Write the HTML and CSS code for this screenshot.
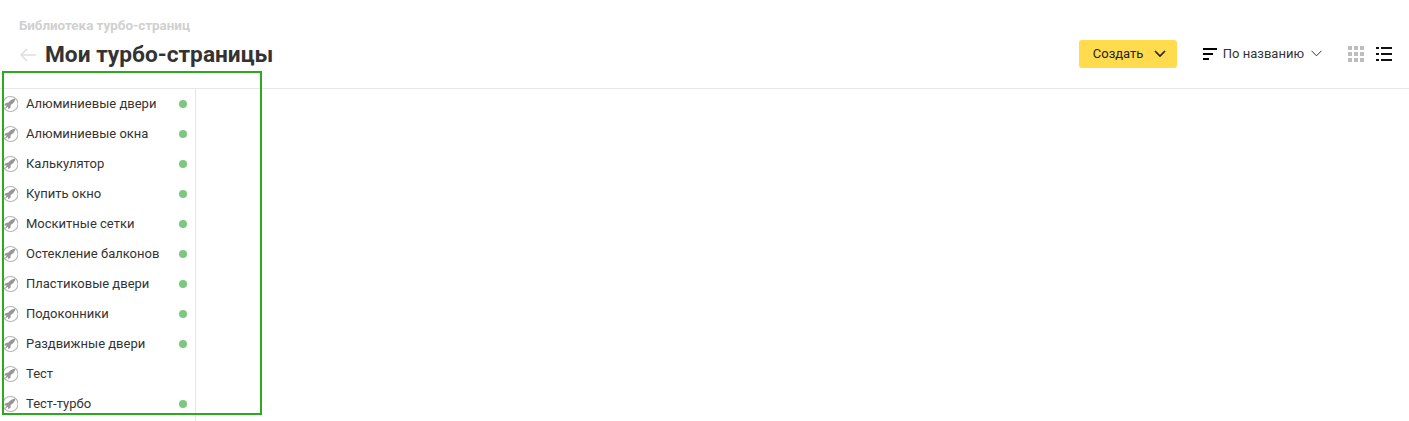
FILE: index.html
```html
<!DOCTYPE html>
<html>
<head>
  <title>Мои турбо-страницы</title>
  <meta charset="UTF-8">
  <link rel="stylesheet" href="styles.css">
</head>
<body>
  <svg class="sprite" width="0" height="0">
    <symbol id="rocket" viewBox="0 0 18 18">
      <circle cx="10.500" cy="9" r="7.500" fill="none" stroke="#b5b5b5" stroke-width="1.100"/>
      <path d="M15.500 3.500C12.500 3.800 10 5.200 8.300 7.600L5.500 8.300 4 10.500l2.800.1-2.600 3.700L8 11.800l.2 2.500 2.300-1.600.2-2.700c2.800-1.500 4.300-3.500 4.800-6.500z" fill="#979797"/>
    </symbol>
  </svg>

  <header class="top">
    <div class="crumb">Библиотека турбо-страниц</div>
    <div class="top-row">
      <svg class="back" width="18" height="14" viewBox="0 0 18 14"><path d="M8 1 2 7l6 6M2 7h15" fill="none" stroke="#dedede" stroke-width="1.500"/></svg>
      <h1>Мои турбо-страницы</h1>
      <div class="tools">
        <button class="create">Создать
          <svg width="12" height="8" viewBox="0 0 12 8"><path d="M1 1l5 5 5-5" fill="none" stroke="#222" stroke-width="1.600"/></svg>
        </button>
        <div class="sort">
          <svg width="14" height="12" viewBox="0 0 14 12"><path d="M0 1h14M0 6h10M0 11h6" stroke="#000" stroke-width="2"/></svg>
          <span>По названию</span>
          <svg width="11" height="7" viewBox="0 0 11 7"><path d="M.5.800l5 5 5-5" fill="none" stroke="#333" stroke-width="1"/></svg>
        </div>
        <div class="views">
          <svg width="16" height="16" viewBox="0 0 16 16" fill="#bdbdbd"><path d="M0 0h4v4H0zM6 0h4v4H6zM12 0h4v4h-4zM0 6h4v4H0zM6 6h4v4H6zM12 6h4v4h-4zM0 12h4v4H0zM6 12h4v4H6zM12 12h4v4h-4z"/></svg>
          <svg width="16" height="14" viewBox="0 0 16 14"><path d="M0 1h3M5 1h11M0 7h3M5 7h11M0 13h3M5 13h11" stroke="#111" stroke-width="2"/></svg>
        </div>
      </div>
    </div>
  </header>

  <div class="content">
    <ul class="pages">
      <li><svg class="ico"><use href="#rocket"/></svg><span class="name">Алюминиевые двери</span><i class="dot"></i></li>
      <li><svg class="ico"><use href="#rocket"/></svg><span class="name">Алюминиевые окна</span><i class="dot"></i></li>
      <li><svg class="ico"><use href="#rocket"/></svg><span class="name">Калькулятор</span><i class="dot"></i></li>
      <li><svg class="ico"><use href="#rocket"/></svg><span class="name">Купить окно</span><i class="dot"></i></li>
      <li><svg class="ico"><use href="#rocket"/></svg><span class="name">Москитные сетки</span><i class="dot"></i></li>
      <li><svg class="ico"><use href="#rocket"/></svg><span class="name">Остекление балконов</span><i class="dot"></i></li>
      <li><svg class="ico"><use href="#rocket"/></svg><span class="name">Пластиковые двери</span><i class="dot"></i></li>
      <li><svg class="ico"><use href="#rocket"/></svg><span class="name">Подоконники</span><i class="dot"></i></li>
      <li><svg class="ico"><use href="#rocket"/></svg><span class="name">Раздвижные двери</span><i class="dot"></i></li>
      <li><svg class="ico"><use href="#rocket"/></svg><span class="name">Тест</span></li>
      <li><svg class="ico"><use href="#rocket"/></svg><span class="name">Тест-турбо</span><i class="dot"></i></li>
    </ul>
  </div>

  <div class="mark"></div>
</body>
</html>
```

FILE: styles.css
```css
html, body { margin: 0; padding: 0; background: #fff; height: 421px; overflow: hidden; }
body { font-family: Roboto, "Noto Sans", sans-serif; color: #222; position: relative; }
.sprite { display: block; position: absolute; }

.top { box-sizing: border-box; padding: 18px 28px 0 19px; border-bottom: 1px solid #e6e6e6; height: 89px; }
.crumb { font-size: 13.400px; line-height: 15px; font-weight: 700; color: #d0d0d0; }
.top-row { display: flex; align-items: center; margin-top: 7px; height: 30px; }
.back { margin-right: 8px; }
h1 { margin: 0; font-size: 22.700px; font-weight: 700; line-height: 30px; color: #333; }

.tools { margin-left: auto; margin-right: -11px; margin-top: -3px; display: flex; align-items: center; }
.create { display: flex; align-items: center; gap: 11px; height: 28px; width: 98px; box-sizing: border-box; padding: 0 0 0 14px; margin-right: 26px; background: #ffdb4d; border: none; border-radius: 3px; font: 13px Roboto, sans-serif; color: #222; }
.sort { display: flex; align-items: center; font-size: 13px; color: #333; margin-right: 26px; }
.sort span { margin: 0 7px 0 6px; }
.views { display: flex; align-items: center; gap: 12px; }

.content { height: 332px; }
.pages { list-style: none; margin: 0; padding: 0; width: 195px; height: 332px; border-right: 1px solid #e6e6e6; }
.pages li { display: flex; align-items: center; height: 30px; font-size: 13px; color: #333; position: relative; }
.ico { width: 18px; height: 18px; flex: none; }
.name { margin-left: 8px; margin-bottom: 2px; }
.dot { position: absolute; left: 179px; top: 11px; width: 8px; height: 8px; border-radius: 50%; background: #7bc87f; }

.mark { position: absolute; left: 2px; top: 71px; width: 256px; height: 340px; border: 2px solid #2bab1c; pointer-events: none; }
```
